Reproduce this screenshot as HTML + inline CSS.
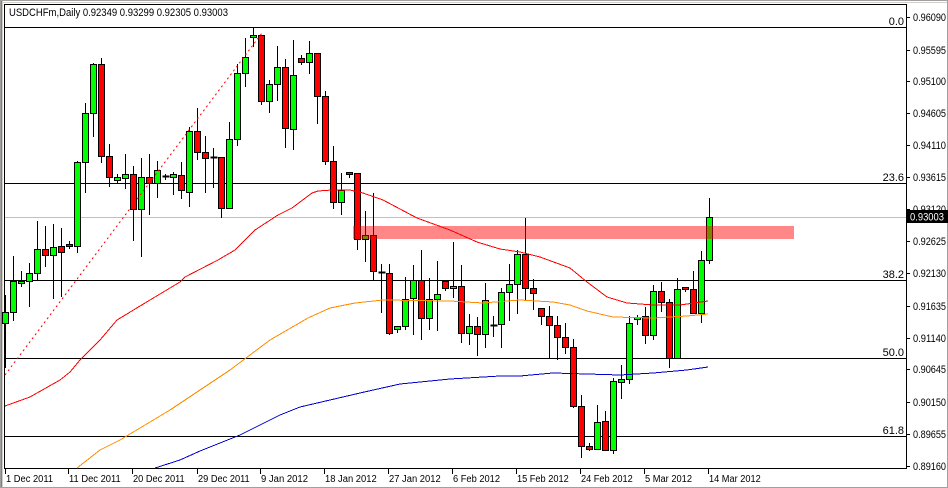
<!DOCTYPE html>
<html><head><meta charset="utf-8"><style>
html,body{margin:0;padding:0;background:#fff;width:948px;height:488px;overflow:hidden}
svg{display:block}
text{font-family:"Liberation Sans",sans-serif;font-size:11px;fill:#000}
</style></head><body>
<svg id="c" width="948" height="488" xmlns="http://www.w3.org/2000/svg" shape-rendering="crispEdges">
<rect x="0" y="0" width="948" height="488" fill="#fff"/>
<rect x="0.5" y="0.5" width="947" height="487" fill="none" stroke="#a0a0a0"/>
<line x1="1" y1="2.5" x2="947" y2="2.5" stroke="#d4d0c8"/>
<line x1="1.5" y1="1" x2="1.5" y2="487" stroke="#808080"/>
<line x1="2.5" y1="1" x2="2.5" y2="487" stroke="#d4d0c8"/>
<rect x="4.5" y="4.5" width="902" height="464" fill="none" stroke="#000"/>
<text x="9" y="16" textLength="219" lengthAdjust="spacingAndGlyphs">USDCHFm,Daily  0.92349 0.93299 0.92305 0.93003</text>
<g stroke="#000">
<line x1="5" y1="27.5" x2="906" y2="27.5"/>
<line x1="5" y1="183.5" x2="906" y2="183.5"/>
<line x1="5" y1="280.5" x2="906" y2="280.5"/>
<line x1="5" y1="358.5" x2="906" y2="358.5"/>
<line x1="5" y1="436.5" x2="906" y2="436.5"/>
</g>
<line x1="5" y1="217.5" x2="906" y2="217.5" stroke="#c0c0c0"/>
<g text-anchor="end">
<text x="904" y="25">0.0</text>
<text x="904" y="181">23.6</text>
<text x="904" y="278">38.2</text>
<text x="904" y="356">50.0</text>
<text x="904" y="434">61.8</text>
</g>
<g id="cand"></g>
<g fill="none" stroke-width="1">
<polyline stroke="#ff0000" stroke-dasharray="2,3" shape-rendering="auto" points="5,375 262,33"/>
<polyline stroke="#ff0000" points="5,406 30,397 60,380 70,372 80,360 100,340 117,320 150,300 180,282 185,277 218,260 235,250 255,230 278,215 292,208 312,193 318,191 332,190 350,190 363,193 383,200 417,218 450,230 477,242 500,249 520,252 540,257 570,268 587,282 607,297 627,303 653,305 680,305 708,301"/>
<polyline stroke="#ff8c00" points="77,468 100,450 120,440 150,422 170,410 182,402 230,370 270,340 308,318 330,308 355,303 383,300 450,301 483,303 520,300 553,302 570,305 587,311 613,317 653,318 687,316 708,314"/>
<polyline stroke="#0000c8" points="155,468 180,460 200,451 240,435 260,425 280,415 300,407 330,400 360,393 400,384 450,379 500,376 520,376 553,373 587,374 620,375 653,373 687,370 708,367"/>
</g>
<rect x="353" y="226" width="441" height="13" fill="rgba(255,0,0,0.47)"/>
<g id="ax"></g>
<rect x="907" y="210" width="41" height="13" fill="#000"/>
<text x="910" y="220.5" textLength="34" lengthAdjust="spacingAndGlyphs" style="fill:#fff">0.93003</text>
<g id="dt"></g>
</svg>
<script>
var NS="http://www.w3.org/2000/svg";
function el(n,a,p){var e=document.createElementNS(NS,n);for(var k in a)e.setAttribute(k,a[k]);p.appendChild(e);return e;}
var D=[
[312,323,295,367,'g'],[281,312,256,320,'g'],[281,283,271,286,'g'],[273,281,263,306,'g'],[249,273,221,280,'g'],
[249,255,226,266,'r'],[247,255,224,298,'g'],[246,252,228,296,'r'],[244,246,241,248,'r'],[162,246,161,252,'g'],
[113,162,103,192,'g'],[64,113,63,136,'g'],[64,156,58,162,'r'],[156,177,144,186,'r'],[177,180,174,182,'g'],
[174,178,154,188,'g'],[174,209,166,240,'r'],[177,209,158,256,'g'],[177,183,154,214,'r'],[170,183,161,197,'g'],
[176,176,174,179,'d'],[174,177,172,194,'g'],[175,190,162,198,'r'],[131,192,127,206,'g'],[131,152,108,159,'r'],
[152,158,136,192,'r'],[157,157,148,187,'d'],[157,208,157,217,'r'],[139,208,122,208,'g'],[73,139,64,145,'g'],
[57,73,38,86,'g'],[35,37,27,46,'g'],[35,101,35,104,'r'],[84,101,80,112,'g'],[67,84,46,100,'g'],
[67,128,59,147,'r'],[75,129,40,149,'g'],[58,62,55,64,'r'],[53,62,41,73,'g'],[53,96,53,123,'r'],
[96,161,91,164,'r'],[161,202,146,208,'r'],[190,202,173,214,'g'],[172,174,172,177,'r'],[173,239,173,249,'r'],
[235,239,211,261,'g'],[235,271,193,280,'r'],[272,272,264,312,'d'],[273,333,264,334,'r'],[326,329,326,332,'g'],
[299,326,277,329,'g'],[280,298,265,334,'g'],[280,318,250,339,'r'],[299,318,278,329,'g'],[294,299,261,330,'g'],
[281,288,281,290,'r'],[286,288,242,297,'g'],[286,333,265,342,'r'],[326,333,314,344,'g'],[326,334,317,355,'r'],
[300,334,283,347,'g'],[325,325,316,336,'d'],[292,324,288,347,'g'],[284,292,264,320,'g'],[254,284,250,313,'g'],
[254,288,218,300,'r'],[288,293,279,309,'r'],[308,316,308,324,'r'],[316,325,306,358,'r'],[325,337,316,359,'r'],
[337,347,323,353,'r'],[347,406,339,407,'r'],[406,446,395,457,'r'],[446,449,443,450,'r'],[422,449,405,449,'g'],
[421,450,411,450,'r'],[381,450,378,453,'g'],[379,382,365,398,'g'],[323,379,316,383,'g'],[317,319,315,324,'g'],
[316,335,307,343,'r'],[291,335,285,339,'g'],[291,302,282,311,'r'],[302,358,299,367,'r'],[289,358,278,358,'g'],
[287,289,287,291,'r'],[289,313,271,313,'r'],[260,313,251,322,'g'],[217,260,198,263,'g']];
var g=document.getElementById('cand');
D.forEach(function(d,i){
  var cx=Math.round(5+8*i)+0.5;
  el('line',{x1:cx,y1:d[2],x2:cx,y2:d[3]+1,stroke:'#000'},g);
  if(d[4]=='d'){el('line',{x1:cx-3,y1:d[0]+0.5,x2:cx+4,y2:d[0]+0.5,stroke:'#000','stroke-width':2},g);}
  else{var h=Math.max(d[1]-d[0],2);el('rect',{x:cx-3,y:d[0]+0.5,width:6,height:h,fill:d[4]=='g'?'#00ff00':'#ff0000',stroke:'#000'},g);}
});
var ax=document.getElementById('ax');
var L=[['0.96090',17],['0.95595',50],['0.95100',81],['0.94605',113],['0.94110',145],['0.93615',177],['0.93120',209],['0.92625',241],['0.92130',273],['0.91635',306],['0.91140',338],['0.90645',369],['0.90150',402],['0.89655',434],['0.89160',466]];
L.forEach(function(l){el('line',{x1:907,y1:l[1]+0.5,x2:910,y2:l[1]+0.5,stroke:'#000'},ax);var t=el('text',{x:913,y:l[1]+4,textLength:33,lengthAdjust:'spacingAndGlyphs'},ax);t.textContent=l[0];});
var dt=document.getElementById('dt');
var T=[['1 Dec 2011',5],['11 Dec 2011',68],['20 Dec 2011',132],['29 Dec 2011',197],['9 Jan 2012',260],['18 Jan 2012',324],['27 Jan 2012',388],['6 Feb 2012',452],['15 Feb 2012',516],['24 Feb 2012',580],['5 Mar 2012',644],['14 Mar 2012',708]];
T.forEach(function(l){el('line',{x1:l[1]+0.5,y1:469,x2:l[1]+0.5,y2:474,stroke:'#000'},dt);var w=l[0].length*4.7;var t=el('text',{x:l[1]+1,y:482,textLength:w,lengthAdjust:'spacingAndGlyphs',style:'font-size:10px'},dt);t.textContent=l[0];});
</script>
</body></html>
